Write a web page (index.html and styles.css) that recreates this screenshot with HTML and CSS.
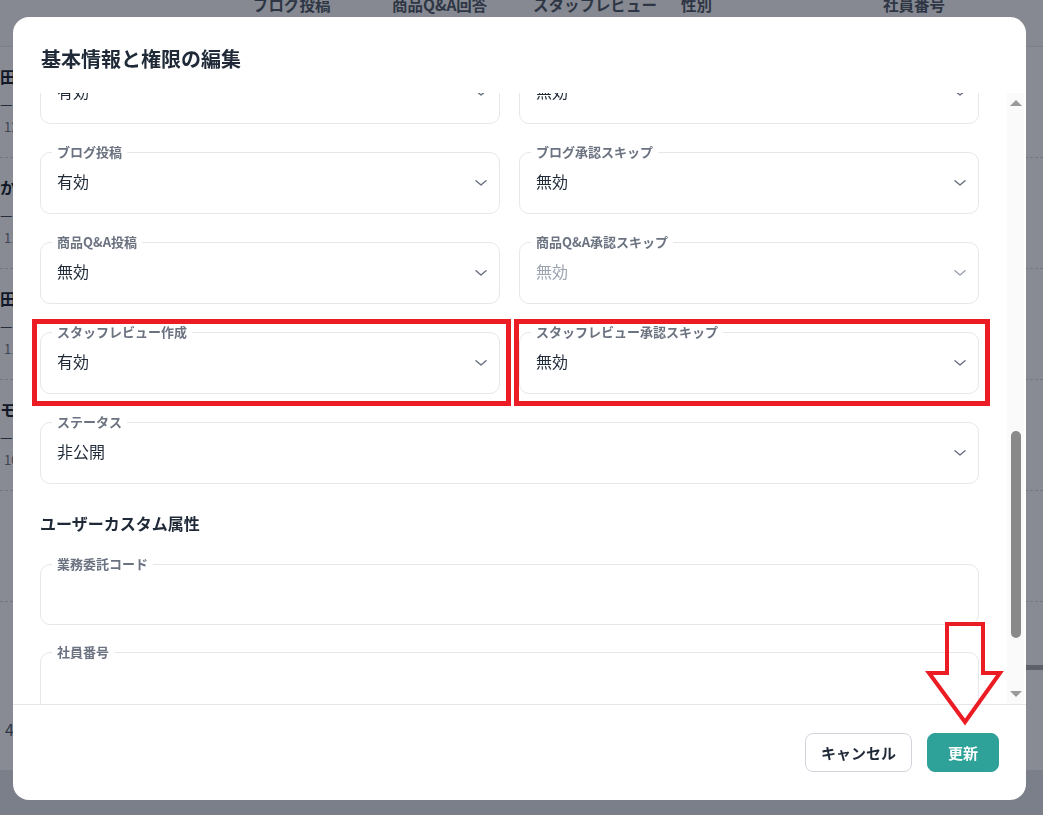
FILE: index.html
```html
<!DOCTYPE html>
<html lang="ja">
<head>
<meta charset="utf-8">
<title>基本情報と権限の編集</title>
<link rel="stylesheet" href="styles.css">
</head>
<body>
<div class="page">
  <div class="thead">
    <span class="th"></span>
    <span class="th">ブログ投稿</span>
    <span class="th">商品Q&amp;A回答</span>
    <span class="th">スタッフレビュー</span>
    <span class="th">性別</span>
    <span class="th">社員番号</span>
  </div>
  <div class="trow"><div class="name">田中 太郎</div><div class="dash">—</div><div class="sub">12/04</div></div>
  <div class="trow"><div class="name">かとう 花子</div><div class="dash">—</div><div class="sub">11/28</div></div>
  <div class="trow"><div class="name">田村 健一</div><div class="dash">—</div><div class="sub">11/15</div></div>
  <div class="trow"><div class="name">モリ ユウキ</div><div class="dash">—</div><div class="sub">10/30</div></div>
  <div class="trow"></div>
  <div class="tfoot">
    <div class="hscroll"></div>
    <div class="pager">4</div>
  </div>
</div>

<div class="overlay"></div>

<div class="modal">
  <div class="modal-head">
    <h1 class="modal-title">基本情報と権限の編集</h1>
  </div>
  <div class="modal-body">
    <div class="scroll-area">
      <div class="form">
        <div class="grid">
          <div class="field"><span class="label">お知らせ投稿</span><span class="value">有効</span><svg class="chev" width="12" height="6" viewBox="0 0 12 6"><path d="M1 0.8 L6 5 L11 0.8" fill="none" stroke="#6b7280" stroke-width="1.5" stroke-linecap="round" stroke-linejoin="round"/></svg></div>
          <div class="field"><span class="label">お知らせ承認スキップ</span><span class="value">無効</span><svg class="chev" width="12" height="6" viewBox="0 0 12 6"><path d="M1 0.8 L6 5 L11 0.8" fill="none" stroke="#6b7280" stroke-width="1.5" stroke-linecap="round" stroke-linejoin="round"/></svg></div>

          <div class="field"><span class="label">ブログ投稿</span><span class="value">有効</span><svg class="chev" width="12" height="6" viewBox="0 0 12 6"><path d="M1 0.8 L6 5 L11 0.8" fill="none" stroke="#6b7280" stroke-width="1.5" stroke-linecap="round" stroke-linejoin="round"/></svg></div>
          <div class="field"><span class="label">ブログ承認スキップ</span><span class="value">無効</span><svg class="chev" width="12" height="6" viewBox="0 0 12 6"><path d="M1 0.8 L6 5 L11 0.8" fill="none" stroke="#6b7280" stroke-width="1.5" stroke-linecap="round" stroke-linejoin="round"/></svg></div>

          <div class="field"><span class="label">商品Q&amp;A投稿</span><span class="value">無効</span><svg class="chev" width="12" height="6" viewBox="0 0 12 6"><path d="M1 0.8 L6 5 L11 0.8" fill="none" stroke="#6b7280" stroke-width="1.5" stroke-linecap="round" stroke-linejoin="round"/></svg></div>
          <div class="field"><span class="label">商品Q&amp;A承認スキップ</span><span class="value value-disabled">無効</span><svg class="chev" width="12" height="6" viewBox="0 0 12 6"><path d="M1 0.8 L6 5 L11 0.8" fill="none" stroke="#9ca3af" stroke-width="1.5" stroke-linecap="round" stroke-linejoin="round"/></svg></div>

          <div class="field"><span class="label">スタッフレビュー作成</span><span class="value">有効</span><svg class="chev" width="12" height="6" viewBox="0 0 12 6"><path d="M1 0.8 L6 5 L11 0.8" fill="none" stroke="#6b7280" stroke-width="1.5" stroke-linecap="round" stroke-linejoin="round"/></svg><span class="mark mark-left"></span></div>
          <div class="field"><span class="label">スタッフレビュー承認スキップ</span><span class="value">無効</span><svg class="chev" width="12" height="6" viewBox="0 0 12 6"><path d="M1 0.8 L6 5 L11 0.8" fill="none" stroke="#6b7280" stroke-width="1.5" stroke-linecap="round" stroke-linejoin="round"/></svg><span class="mark mark-right"></span></div>

          <div class="field field-wide"><span class="label">ステータス</span><span class="value">非公開</span><svg class="chev" width="12" height="6" viewBox="0 0 12 6"><path d="M1 0.8 L6 5 L11 0.8" fill="none" stroke="#6b7280" stroke-width="1.5" stroke-linecap="round" stroke-linejoin="round"/></svg></div>
        </div>

        <h2 class="section-title">ユーザーカスタム属性</h2>
        <div class="stack">
          <div class="field field-text"><span class="label">業務委託コード</span></div>
          <div class="field field-text"><span class="label">社員番号</span></div>
        </div>
      </div>
    </div>
    <div class="scrollbar">
      <div class="sb-btn"><span class="tri-up"></span></div>
      <div class="sb-track"><div class="sb-thumb"></div></div>
      <div class="sb-btn"><span class="tri-down"></span></div>
    </div>
  </div>
  <div class="modal-foot">
    <button class="btn btn-cancel" type="button">キャンセル</button>
    <button class="btn btn-primary" type="button">更新</button>
  </div>
</div>

<svg class="arrow" width="80" height="108" viewBox="0 0 80 108" aria-hidden="true">
  <polygon points="22,4 58,4 58,53 75,53 40,102 4,53 22,53" fill="none" stroke="#ec1c24" stroke-width="4" stroke-linejoin="miter"/>
</svg>
</body>
</html>
```

FILE: styles.css
```css
* {
  box-sizing: border-box;
  margin: 0;
  padding: 0;
}

html, body {
  height: 100%;
}

body {
  font-family: "Noto Sans CJK JP", "Noto Sans", sans-serif;
  background: #e5e7eb;
  overflow: hidden;
  color: #1f2937;
}

/* ---------- background page ---------- */
.page {
  background: #ffffff;
  height: 770px;
}

.thead {
  display: grid;
  grid-template-columns: 253px 139px 141px 148px 202px 1fr;
  height: 47px;
  border-bottom: 1px solid #e5e7eb;
  background: #fafafa;
}

.th {
  font-size: 15.5px;
  font-weight: 700;
  line-height: 20px;
  margin-top: -6px;
  color: #4b5563;
  white-space: nowrap;
}

.trow {
  height: 111px;
  border-bottom: 1px dashed #d1d5db;
  padding-top: 18px;
}

.name {
  font-size: 16px;
  font-weight: 700;
  line-height: 22px;
  color: #111827;
  white-space: nowrap;
}

.dash {
  margin-top: 5px;
  font-size: 14px;
  line-height: 22px;
  color: #374151;
}

.sub {
  margin-top: 3px;
  padding-left: 4px;
  font-size: 13px;
  line-height: 20px;
  color: #6b7280;
}

.tfoot {
  padding-top: 63px;
}

.hscroll {
  height: 5px;
  margin-left: 500px;
  background: #a8a8a8;
}

.pager {
  margin-top: 47px;
  padding-left: 5px;
  font-size: 16px;
  line-height: 24px;
  color: #4b5563;
}

/* ---------- overlay + modal ---------- */
.overlay {
  position: fixed;
  inset: 0;
  background: rgba(17, 24, 39, 0.5);
}

.modal {
  position: fixed;
  left: 13px;
  top: 17px;
  width: 1013px;
  height: 783px;
  background: #ffffff;
  border-radius: 16px;
  display: flex;
  flex-direction: column;
  overflow: hidden;
}

.modal-head {
  padding: 28px 28px 20px;
}

.modal-title {
  font-size: 20px;
  font-weight: 700;
  line-height: 28px;
  color: #1f2937;
}

.modal-body {
  flex: 1;
  display: flex;
  min-height: 0;
}

.scroll-area {
  flex: 1;
  overflow: hidden;
  padding: 0 28px 0 27px;
}

.form {
  margin-top: -31px;
}

.grid {
  display: grid;
  grid-template-columns: 1fr 1fr;
  column-gap: 19px;
  row-gap: 28px;
}

.field {
  position: relative;
  height: 62px;
  border: 1px solid #e5e7eb;
  border-radius: 10px;
  display: flex;
  align-items: center;
  padding: 0 12px 0 16px;
}

.field-wide {
  grid-column: 1 / 3;
}

.field-text {
  height: 61px;
}

.label {
  position: absolute;
  top: -10px;
  left: 11px;
  padding: 0 5px;
  background: #ffffff;
  font-size: 13px;
  font-weight: 700;
  line-height: 18px;
  color: #6b7280;
  white-space: nowrap;
}

.value {
  flex: 1;
  font-size: 16px;
  line-height: 24px;
  margin-bottom: 4px;
  color: #1f2937;
}

.value-disabled {
  color: #9ca3af;
}

.chev {
  display: block;
  flex: none;
  margin-bottom: 1px;
}

.section-title {
  margin-top: 27px;
  margin-bottom: 29px;
  font-size: 16px;
  font-weight: 700;
  line-height: 24px;
  color: #1f2937;
}

.stack {
  display: flex;
  flex-direction: column;
  gap: 27px;
  padding-bottom: 40px;
}

/* red annotation boxes */
.mark {
  position: absolute;
  top: -14px;
  bottom: -13px;
  border: 5px solid #ec1c24;
  pointer-events: none;
}

.mark-left {
  left: -9px;
  right: -12px;
}

.mark-right {
  left: -6px;
  right: -12px;
}

/* scrollbar */
.scrollbar {
  width: 17px;
  margin-right: 2px;
  background: #fafafa;
  display: flex;
  flex-direction: column;
}

.sb-btn {
  height: 20px;
  display: flex;
  align-items: center;
  justify-content: center;
}

.tri-up {
  width: 0;
  height: 0;
  border-left: 6px solid transparent;
  border-right: 6px solid transparent;
  border-bottom: 6px solid #9a9a9a;
}

.tri-down {
  width: 0;
  height: 0;
  border-left: 6px solid transparent;
  border-right: 6px solid transparent;
  border-top: 6px solid #9a9a9a;
}

.sb-track {
  flex: 1;
  position: relative;
  padding-top: 318px;
}

.sb-thumb {
  width: 10px;
  height: 207px;
  margin-left: 4px;
  border-radius: 5px;
  background: #8a8a8a;
}

/* footer */
.modal-foot {
  border-top: 1px solid #e5e7eb;
  height: 96px;
  display: flex;
  justify-content: flex-end;
  align-items: center;
  gap: 15px;
  padding: 0 27px;
}

.btn {
  height: 39px;
  border-radius: 8px;
  font-family: "Noto Sans CJK JP", "Noto Sans", sans-serif;
  font-size: 15px;
  font-weight: 700;
  line-height: 20px;
  cursor: pointer;
}

.btn-cancel {
  padding: 0 15px;
  background: #ffffff;
  border: 1px solid #d1d5db;
  color: #1f2937;
}

.btn-primary {
  width: 72px;
  background: #2ea198;
  border: 1px solid #2ea198;
  color: #ffffff;
}

/* annotation arrow */
.arrow {
  position: fixed;
  left: 925px;
  top: 620px;
}
```
